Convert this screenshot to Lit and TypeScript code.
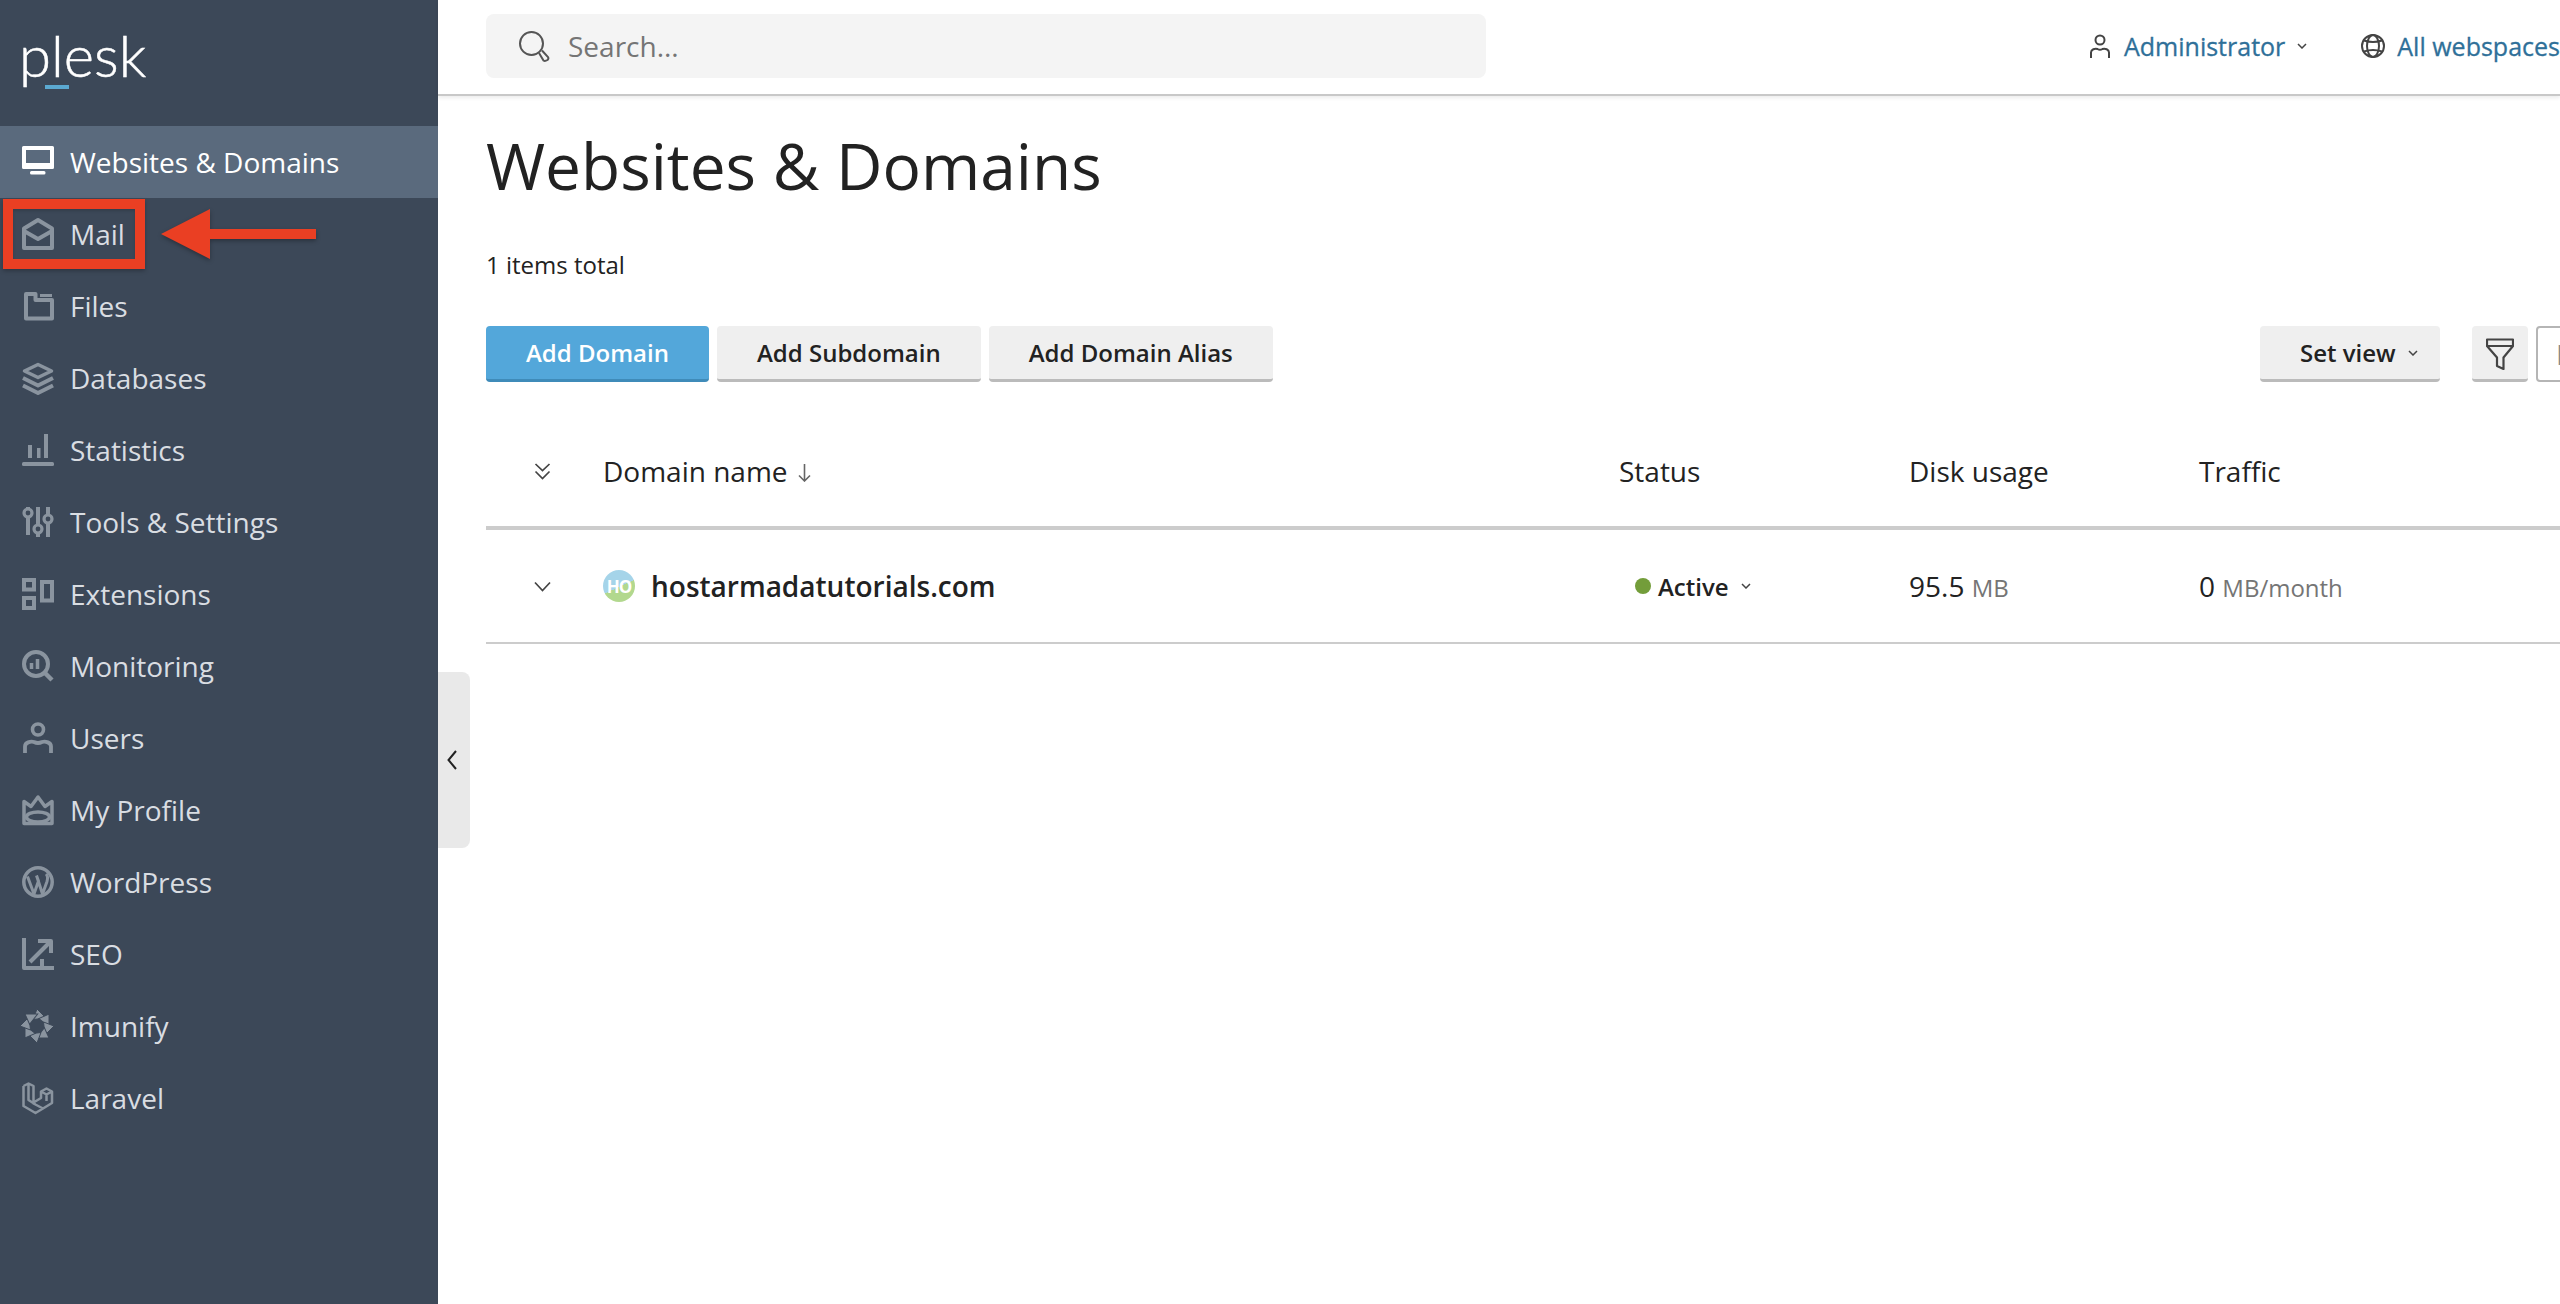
import { LitElement, css, html, svg } from "lit";
import { customElement } from "lit/decorators.js";

const stroke = (d: string, w = 3) =>
  svg`<path d=${d} fill="none" stroke="currentColor" stroke-width=${w} stroke-linejoin="round"></path>`;

const navIcons = {
  monitor: svg`
    <path fill-rule="evenodd" fill="currentColor" d="M1.500 0h29A1.500 1.500 0 0 1 32 1.500v20a1.500 1.500 0 0 1-1.500 1.500h-29A1.500 1.500 0 0 1 0 21.500v-20A1.500 1.500 0 0 1 1.500 0zM4 4v13h24V4z"></path>
    <rect x="8" y="25" width="15.500" height="3.500" rx="1.500" fill="currentColor"></rect>`,
  mail: svg`${stroke("M16 2 30 10.500V30H2V10.500Z", 4)}${stroke("M2 13 16 21 30 13", 4)}`,
  files: svg`${stroke("M4 4H13.500V10H30V28.500H4Z", 4)}${stroke("M18 5.500H30", 3)}`,
  layers: svg`${stroke("M16 2.500 29.500 9 16 15.500 2.500 9Z", 3.500)}${stroke("M1 16 16 23.500 31 16", 4)}${stroke("M1 23.500 16 31 31 23.500", 4)}`,
  stats: svg`
    <rect x="0" y="28" width="32" height="4" rx="1.500" fill="currentColor"></rect>
    <rect x="6" y="11" width="4" height="13" fill="currentColor"></rect>
    <rect x="15" y="14" width="3.500" height="10" fill="currentColor"></rect>
    <rect x="22" y="0" width="4" height="24" fill="currentColor"></rect>`,
  tools: svg`
    ${stroke("M6 1V3M6 11V29M16 1V19M16 27V31M26 1V8M26 17V31", 4)}
    <circle cx="6" cy="7" r="4" fill="none" stroke="currentColor" stroke-width="3.200"></circle>
    <circle cx="16" cy="23" r="4" fill="none" stroke="currentColor" stroke-width="3.200"></circle>
    <circle cx="26" cy="13" r="4" fill="none" stroke="currentColor" stroke-width="3.200"></circle>`,
  extensions: svg`
    <rect x="2" y="2" width="10" height="9.500" fill="none" stroke="currentColor" stroke-width="4"></rect>
    <rect x="2" y="20" width="10" height="10" fill="none" stroke="currentColor" stroke-width="4"></rect>
    <rect x="20" y="4" width="10" height="18.500" fill="none" stroke="currentColor" stroke-width="4"></rect>`,
  monitoring: svg`
    <circle cx="14" cy="14" r="12" fill="none" stroke="currentColor" stroke-width="4"></circle>
    ${stroke("M23 23 30 30", 4.500)}
    ${stroke("M9.500 13V19M15.500 9V19", 3.500)}`,
  user: svg`
    <circle cx="16" cy="7.500" r="5.500" fill="none" stroke="currentColor" stroke-width="3.600"></circle>
    ${stroke("M3 31V24.500C3 20.500 8.500 19 12 20Q16 22 20 20C23.500 19 29 20.500 29 24.500V31", 3.800)}`,
  crown: svg`
    ${stroke("M2 29.500V7.500L9 12.500 16 3 23 12.500 30 7.500V29.500Z", 3.500)}
    <ellipse cx="16" cy="23" rx="11.500" ry="5" fill="none" stroke="currentColor" stroke-width="3.500"></ellipse>`,
  wordpress: svg`
    <circle cx="16" cy="16" r="14.200" fill="none" stroke="currentColor" stroke-width="3.500"></circle>
    ${stroke("M5.500 10.500 12 28 16.500 15 14.500 9.500M14.500 9.500 20.500 28 25 15.500Q26.500 10.500 24 8", 3)}`,
  seo: svg`
    ${stroke("M2 0V30H32", 4)}
    ${stroke("M8 24 27 5", 4)}
    ${stroke("M16 3H29V15", 4)}
    <rect x="18" y="21" width="4" height="7" fill="currentColor"></rect>`,
  imunify: svg`${[0, 45, 90, 135, 180, 225, 270, 315].map(
    (r) => svg`<polygon points="15,-1 24,8 11,9.500" fill="currentColor" stroke="#3c4858" stroke-width="1" transform="rotate(${r} 15 16)"></polygon>`,
  )}`,
  laravel: svg`
    ${stroke("M1.500 4 6.500 1.500 11.500 4V21.500L21 26.500 30 21V9.500L24.500 6.500 19 9.500V16L11.500 20.500M1.500 4V24L13.500 31 21 26.500M6.500 1.500V18L13.500 22.500M19 9.500 24.500 12.500 30 9.500M24.500 12.500V19", 2.500)}`,
};

const navItems: { label: string; icon: keyof typeof navIcons; active?: boolean }[] = [
  { label: "Websites & Domains", icon: "monitor", active: true },
  { label: "Mail", icon: "mail" },
  { label: "Files", icon: "files" },
  { label: "Databases", icon: "layers" },
  { label: "Statistics", icon: "stats" },
  { label: "Tools & Settings", icon: "tools" },
  { label: "Extensions", icon: "extensions" },
  { label: "Monitoring", icon: "monitoring" },
  { label: "Users", icon: "user" },
  { label: "My Profile", icon: "crown" },
  { label: "WordPress", icon: "wordpress" },
  { label: "SEO", icon: "seo" },
  { label: "Imunify", icon: "imunify" },
  { label: "Laravel", icon: "laravel" },
];

const chevron = html`<svg class="chev" viewBox="0 0 10 6"><path d="M1 1l4 4 4-4" fill="none" stroke="currentColor" stroke-width="1.500"></path></svg>`;

@customElement("app-root")
export class AppRoot extends LitElement {
  render() {
    return html`
      <aside class="sidebar">
        <div class="logo"><span class="logo-text">plesk</span><i class="logo-bar"></i></div>
        <nav>
          ${navItems.map(
            (item) => html`
              <a class=${item.active ? "nav-item active" : "nav-item"}>
                <svg class="nav-icon" viewBox="0 0 32 32">${navIcons[item.icon]}</svg>
                <span>${item.label}</span>
              </a>
            `,
          )}
        </nav>
      </aside>

      <div class="collapse">
        <svg viewBox="0 0 10 20"><path d="M9 1 1.500 10 9 19" fill="none" stroke="#222" stroke-width="2"></path></svg>
      </div>

      <main>
        <header>
          <div class="search">
            <svg viewBox="0 0 32 32">
              <circle cx="13.500" cy="13.500" r="11.500" fill="none" stroke="#555" stroke-width="2"></circle>
              <path d="M21 23 25.500 30.500Q27 31.500 29.500 30 31 28.500 30 27L24 20.500" fill="none" stroke="#555" stroke-width="2"></path>
            </svg>
            <span>Search...</span>
          </div>
          <div class="top-right">
            <svg class="top-icon" viewBox="0 0 20 24">
              <circle cx="10" cy="6" r="4.500" fill="none" stroke="#444" stroke-width="2"></circle>
              <path d="M1 24V18.500C1 15.500 5 14 7.500 15Q10 16.500 12.500 15C15 14 19 15.500 19 18.500V24" fill="none" stroke="#444" stroke-width="2"></path>
            </svg>
            <a class="top-link">Administrator</a>
            ${chevron}
            <svg class="top-icon globe" viewBox="0 0 24 24">
              <g fill="none" stroke="#444" stroke-width="2">
                <circle cx="12" cy="12" r="11"></circle>
                <ellipse cx="12" cy="12" rx="6" ry="11"></ellipse>
                <path d="M3 6.500Q12 9.500 21 6.500M3 17.500Q12 14.500 21 17.500"></path>
              </g>
            </svg>
            <a class="top-link">All webspaces</a>
          </div>
        </header>

        <div class="content">
          <h1>Websites &amp; Domains</h1>
          <p class="total">1 items total</p>

          <div class="toolbar">
            <button class="btn primary">Add Domain</button>
            <button class="btn">Add Subdomain</button>
            <button class="btn">Add Domain Alias</button>
            <div class="toolbar-right">
              <button class="btn setview">Set view ${chevron}</button>
              <button class="btn filter">
                <svg viewBox="0 0 28 32">
                  <path d="M1 1.500H27V8L17.500 19.500V31L11 28V19.500L1 8ZM1 8H27" fill="none" stroke="#444" stroke-width="2.200" stroke-linejoin="round"></path>
                </svg>
              </button>
              <div class="find">F</div>
            </div>
          </div>

          <div class="table">
            <div class="row head">
              <span class="toggle">
                <svg viewBox="0 0 17 17"><path d="M1.500 1 8.500 7.500 15.500 1M1.500 8.500 8.500 15.500 15.500 8.500" fill="none" stroke="#444" stroke-width="1.700"></path></svg>
              </span>
              <span class="name-head">Domain name
                <svg class="sort" viewBox="0 0 13 18"><path d="M6.500 0V17M1 11.500 6.500 17 12 11.500" fill="none" stroke="#666" stroke-width="1.600"></path></svg>
              </span>
              <span>Status</span>
              <span>Disk usage</span>
              <span>Traffic</span>
            </div>
            <div class="row body">
              <span class="toggle">
                <svg viewBox="0 0 17 17"><path d="M1 4.500 8.500 12.500 16 4.500" fill="none" stroke="#444" stroke-width="1.700"></path></svg>
              </span>
              <span class="domain"><i class="avatar">HO</i><b>hostarmadatutorials.com</b></span>
              <span class="status"><i class="dot"></i><b>Active</b>${chevron}</span>
              <span>95.5 <small>MB</small></span>
              <span>0 <small>MB/month</small></span>
            </div>
          </div>
        </div>
      </main>

      <div class="mark"></div>
      <svg class="arrow" viewBox="0 0 160 54">
        <path d="M2 27 51 2V22H157V32H51V52Z" fill="#ea3f23"></path>
      </svg>
    `;
  }

  static styles = css`
    :host {
      display: flex;
      position: relative;
      width: 2560px;
      height: 1304px;
      overflow: hidden;
      background: #fff;
      color: #222;
      font-family: "Open Sans", "Liberation Sans", sans-serif;
      font-size: 28px;
    }

    .sidebar {
      flex: none;
      width: 438px;
      background: #3c4858;
    }

    .logo {
      position: relative;
      height: 126px;
      box-sizing: border-box;
      padding: 15px 0 0 19px;
    }

    .logo-text {
      color: #fff;
      font-family: Lato, "Open Sans", sans-serif;
      font-weight: 300;
      font-size: 58px;
      line-height: 80px;
      -webkit-text-stroke: 0.5px #fff;
    }

    .logo-bar {
      position: absolute;
      left: 45px;
      top: 85px;
      width: 24px;
      height: 4px;
      background: #5ba9d1;
    }

    .nav-item {
      display: flex;
      align-items: center;
      gap: 16px;
      height: 72px;
      padding-left: 22px;
      color: #d9dde2;
    }

    .nav-item.active {
      background: #5a6a7d;
      color: #fff;
    }

    .nav-icon {
      flex: none;
      width: 32px;
      height: 32px;
      color: #8a949f;
      overflow: visible;
    }

    .active .nav-icon {
      color: #fff;
    }

    .collapse {
      position: absolute;
      left: 438px;
      top: 672px;
      width: 32px;
      height: 176px;
      display: flex;
      align-items: center;
      justify-content: center;
      background: #e9e9e9;
      border-radius: 0 8px 8px 0;
    }

    .collapse svg {
      width: 10px;
      height: 20px;
      margin-right: 4px;
    }

    main {
      flex: 1;
      min-width: 0;
    }

    header {
      display: flex;
      align-items: center;
      justify-content: space-between;
      height: 94px;
      padding-left: 48px;
      border-bottom: 2px solid #c8c8c8;
      box-shadow: 0 2px 4px rgba(0, 0, 0, 0.08);
    }

    .search {
      display: flex;
      align-items: center;
      gap: 18px;
      width: 1000px;
      height: 64px;
      box-sizing: border-box;
      padding-left: 32px;
      background: #f4f4f4;
      border-radius: 8px;
      color: #757575;
      margin-top: -2px;
    }

    .search svg {
      width: 32px;
      height: 32px;
    }

    .top-right {
      flex: none;
      display: flex;
      align-items: center;
      width: 470px;
      white-space: nowrap;
      margin-top: -2px;
    }

    .top-icon {
      flex: none;
      width: 20px;
      height: 24px;
      margin-right: 14px;
    }

    .top-icon.globe {
      width: 24px;
      margin: 0 12px 0 54px;
    }

    .top-link {
      color: #2f7099;
      font-size: 25px;
      font-weight: 500;
      -webkit-text-stroke: 0.3px #2f7099;
    }

    .chev {
      flex: none;
      width: 10px;
      height: 6px;
      margin-left: 12px;
      color: #444;
    }

    .content {
      padding-left: 48px;
    }

    h1 {
      margin: 0;
      padding-top: 26px;
      font-size: 64px;
      font-weight: 400;
      line-height: 88px;
    }

    .total {
      margin: 0;
      padding-top: 37px;
      font-size: 24px;
      line-height: 36px;
    }

    .toolbar {
      display: flex;
      gap: 8px;
      margin-top: 43px;
    }

    .btn {
      height: 56px;
      box-sizing: border-box;
      padding: 0 40px;
      border: none;
      border-bottom: 3px solid #bbb;
      border-radius: 4px;
      background: #efefef;
      color: #222;
      font: 600 24px "Open Sans", sans-serif;
    }

    .btn.primary {
      background: #53a7da;
      border-bottom-color: #3f8bb9;
      color: #fff;
    }

    .toolbar-right {
      display: flex;
      margin-left: auto;
      margin-right: -40px;
    }

    .setview {
      display: flex;
      align-items: center;
      width: 180px;
      white-space: nowrap;
    }

    .filter {
      width: 56px;
      margin-left: 32px;
      padding: 0;
    }

    .filter svg {
      width: 28px;
      height: 32px;
      vertical-align: middle;
    }

    .find {
      width: 64px;
      height: 56px;
      box-sizing: border-box;
      margin-left: 8px;
      padding-left: 18px;
      border: 2px solid #b5b5b5;
      border-radius: 4px;
      color: #8a8a8a;
      line-height: 52px;
    }

    .table {
      margin-top: 34px;
    }

    .row {
      display: grid;
      grid-template-columns: 117px 1016px 290px 290px 1fr;
      align-items: center;
    }

    .row.head {
      height: 114px;
      box-sizing: border-box;
      border-bottom: 4px solid #ccc;
    }

    .row.body {
      height: 114px;
      box-sizing: border-box;
      border-bottom: 2px solid #ccc;
    }

    .toggle {
      display: flex;
      padding-left: 48px;
    }

    .toggle svg {
      width: 17px;
      height: 17px;
    }

    .name-head {
      display: flex;
      align-items: center;
      gap: 10px;
    }

    .sort {
      width: 13px;
      height: 18px;
      margin-top: 4px;
    }

    small {
      color: #757575;
      font-size: 24px;
    }

    .domain {
      display: flex;
      align-items: center;
      gap: 16px;
    }

    .domain b {
      font-weight: 600;
    }

    .avatar {
      display: flex;
      align-items: center;
      justify-content: center;
      width: 32px;
      height: 32px;
      border-radius: 50%;
      background: linear-gradient(155deg, #a5d4e9 52%, #b2d88e 52%);
      color: #fff;
      font-size: 17px;
      font-style: normal;
      font-weight: 700;
      letter-spacing: -1px;
    }

    .status {
      display: flex;
      align-items: center;
      padding-left: 16px;
      font-size: 24px;
    }

    .status b {
      font-weight: 600;
    }

    .dot {
      width: 16px;
      height: 16px;
      margin-right: 7px;
      border-radius: 50%;
      background: #739d3a;
    }

    .mark {
      position: absolute;
      left: 3px;
      top: 199px;
      width: 142px;
      height: 70px;
      box-sizing: border-box;
      border: 10px solid #ea3f23;
      box-shadow: 0 2px 4px rgba(0, 0, 0, 0.25), inset 0 2px 3px rgba(0, 0, 0, 0.15);
    }

    .arrow {
      position: absolute;
      left: 159px;
      top: 207px;
      width: 160px;
      height: 54px;
      filter: drop-shadow(0 2px 2px rgba(0, 0, 0, 0.3));
    }
  `;
}
